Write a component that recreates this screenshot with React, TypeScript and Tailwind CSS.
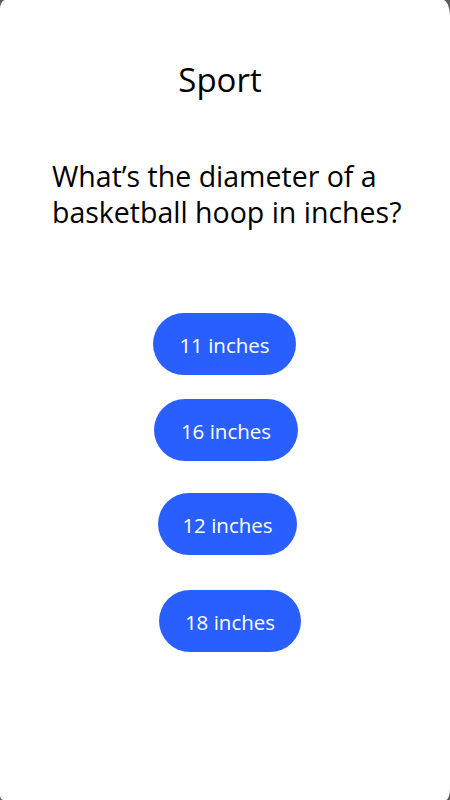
import React from "react";

const answers = [
  { label: "11 inches", cls: "w-[143px] ml-[-1px]" },
  { label: "16 inches", cls: "w-[144px] ml-[2px] mt-[24px]" },
  { label: "12 inches", cls: "w-[139px] ml-[5px] mt-[32px]" },
  { label: "18 inches", cls: "w-[142px] ml-[10px] mt-[35px]" },
];

export default function App() {
  return (
    <div className="w-[450px] h-[800px] bg-[#5a5a5a]">
      <div
        className="w-full h-full bg-white rounded-tl-[5px_9px] rounded-tr-[7px_16px] rounded-bl-[3px_5px] rounded-br-[4px_12px] flex flex-col"
        style={{ fontFamily: '"Open Sans", "Noto Sans", sans-serif' }}
      >
        <h1 className="mt-[58px] pr-[10px] text-center text-[33px] leading-[44px] text-black">Sport</h1>
        <p className="mt-[56px] pl-[52px] pr-[8px] text-[28.5px] leading-[36px] text-black">
          What’s the diameter of a basketball hoop in inches?
        </p>
        <div className="mt-[83px] flex flex-col items-center">
          {answers.map((a) => (
            <button
              key={a.label}
              className={`h-[62px] pt-[3px] rounded-full bg-[#2a5fff] text-white text-[20.5px] ${a.cls}`}
            >
              {a.label}
            </button>
          ))}
        </div>
      </div>
    </div>
  );
}
